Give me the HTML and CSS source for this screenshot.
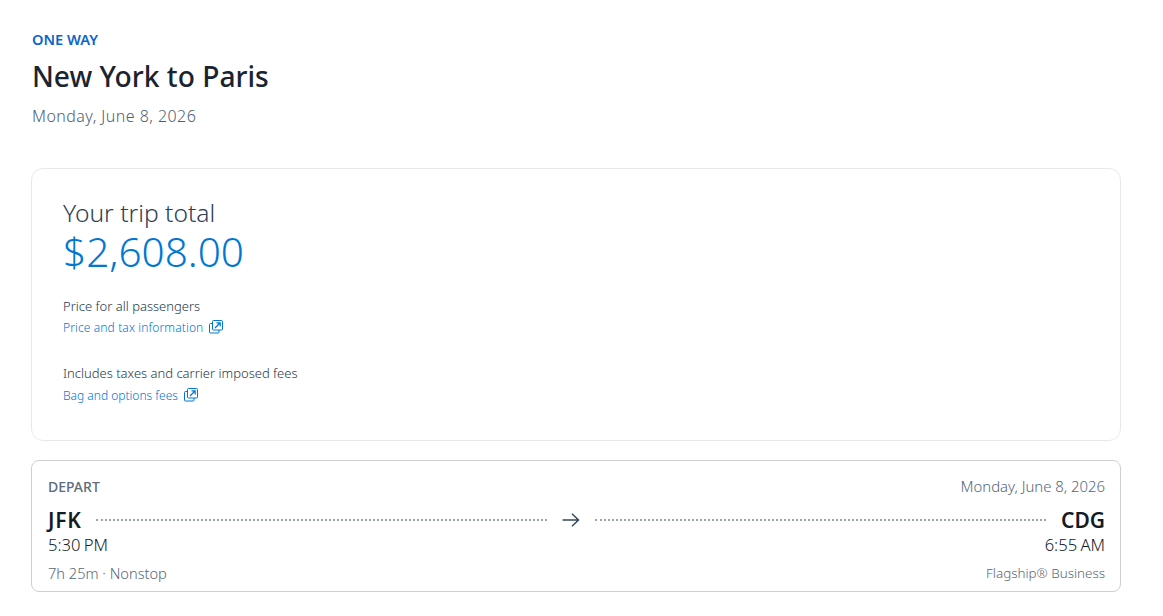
FILE: index.html
```html
<!DOCTYPE html>
<html lang="en">
<head>
<meta charset="utf-8">
<title>New York to Paris</title>
<link rel="stylesheet" href="styles.css">
</head>
<body>
<main class="page">
  <header class="head">
    <div class="kicker">ONE WAY</div>
    <h1 class="title">New York to Paris</h1>
    <div class="subdate">Monday, June 8, 2026</div>
  </header>
  <section class="total-card">
    <div class="total-label">Your trip total</div>
    <div class="total-price">$2,608.00</div>
    <div class="note-block first">
      <div class="note">Price for all passengers</div>
      <a class="link wide" href="#">Price and tax information
        <svg class="ext" viewBox="0 0 14 14" width="14" height="14" fill="none" stroke="currentColor" stroke-width="1"><path d="M3.5 3.5H1.5a1 1 0 0 0-1 1v7.5a1 1 0 0 0 1 1H9a1 1 0 0 0 1-1v-2"/><rect x="3.5" y="0.5" width="10" height="9.5" rx="1"/><path d="M6 8l5-5M7.5 2.8h3.7v3.7" stroke-width="1.2"/></svg>
      </a>
    </div>
    <div class="note-block second">
      <div class="note">Includes taxes and carrier imposed fees</div>
      <a class="link" href="#">Bag and options fees
        <svg class="ext" viewBox="0 0 14 14" width="14" height="14" fill="none" stroke="currentColor" stroke-width="1"><path d="M3.5 3.5H1.5a1 1 0 0 0-1 1v7.5a1 1 0 0 0 1 1H9a1 1 0 0 0 1-1v-2"/><rect x="3.5" y="0.5" width="10" height="9.5" rx="1"/><path d="M6 8l5-5M7.5 2.8h3.7v3.7" stroke-width="1.2"/></svg>
      </a>
    </div>
  </section>
  <section class="flight-card">
    <div class="row row-top">
      <span class="depart">DEPART</span>
      <span class="muted date">Monday, June 8, 2026</span>
    </div>
    <div class="row route">
      <span class="code origin">JFK</span>
      <span class="dots"></span>
      <svg class="arrow" viewBox="0 0 18 14" width="18" height="14" fill="none" stroke="#36495a" stroke-width="1.5"><path d="M0.5 7H16.5M10 0.8L16.5 7L10 13.2"/></svg>
      <span class="dots"></span>
      <span class="code">CDG</span>
    </div>
    <div class="row row-time">
      <span class="time">5:30 PM</span>
      <span class="time">6:55 AM</span>
    </div>
    <div class="row row-foot">
      <span class="muted">7h 25m · Nonstop</span>
      <span class="muted narrow">Flagship® Business</span>
    </div>
  </section>
</main>
</body>
</html>
```

FILE: styles.css
```css
* { box-sizing: border-box; }
html, body { margin: 0; padding: 0; background: #fff; }
body { font-family: "Noto Sans", "Open Sans", sans-serif; color: #131c26; overflow: hidden; }
.page { width: 1121px; padding: 29px 0 0 31px; }
.head { padding-left: 1px; }
.kicker { font-size: 14.6px; line-height: 20px; font-weight: 600; color: #0a66c8; }
.title { margin: 7px 0 0; font-size: 28.2px; line-height: 40px; font-weight: 500; color: #1a2430; }
.subdate { margin-top: 9px; font-size: 16px; line-height: 22px; font-weight: 300; color: #4f6073; letter-spacing: 0.45px; }
.total-card { margin-top: 41px; height: 273px; border: 1px solid #e6e8eb; border-radius: 12px; padding: 30px 31px; }
.total-label { font-size: 24.6px; line-height: 28px; font-weight: 300; color: #2c4056; }
.total-price { font-size: 40.5px; line-height: 46px; font-weight: 300; color: #0078d2; margin-top: 2px; }
.note-block.first { margin-top: 20px; }
.note-block.second { margin-top: 23px; }
.note { font-size: 13px; line-height: 22px; font-weight: 300; color: #26384a; }
.link { display: flex; align-items: center; gap: 6px; font-size: 12px; line-height: 22px; font-weight: 300; color: #0078d2; text-decoration: none; }
.link.wide { letter-spacing: 0.12px; }
.note-block.second .link { margin-top: 1px; }
.ext { flex: none; margin-top: -3px; }
.flight-card { margin-top: 19px; height: 132px; border: 1px solid #ccd0d6; border-radius: 8px; padding: 15px 15px 0 16px; }
.row { display: flex; justify-content: space-between; align-items: center; }
.row-top { height: 20px; }
.depart { font-size: 14px; font-weight: 500; color: #5b6b7b; }
.muted { font-size: 14.6px; font-weight: 300; color: #566779; }
.muted.date { font-size: 14.9px; }
.muted.narrow { font-size: 13.4px; }
.route { margin-top: 13px; height: 22px; gap: 15px; }
.code { font-size: 21px; font-weight: 600; color: #131c26; }
.code.origin { letter-spacing: 0.7px; }
.dots { flex: 1; border-top: 2px dotted #9aa5af; }
.arrow { flex: none; }
.row-time { height: 22px; margin-top: 2px; }
.time { font-size: 16.6px; font-weight: 300; color: #131c26; word-spacing: -1px; }
.row-foot { margin-top: 8px; height: 20px; }
```
